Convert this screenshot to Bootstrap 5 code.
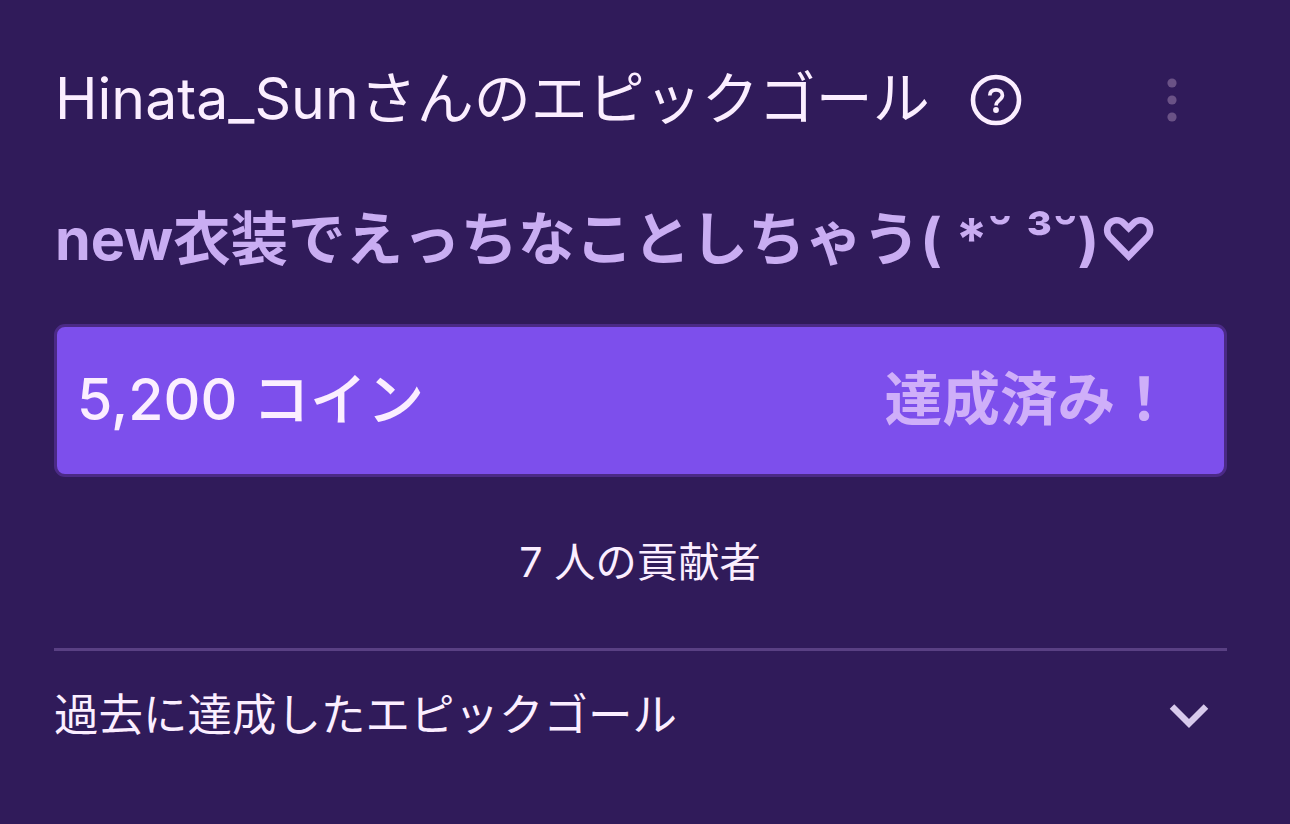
<!DOCTYPE html>
<html lang="ja">
<head>
<meta charset="utf-8">
<meta name="viewport" content="width=device-width, initial-scale=1">
<title>エピックゴール</title>
<link href="https://cdn.jsdelivr.net/npm/bootstrap@5.3.0/dist/css/bootstrap.min.css" rel="stylesheet">
<style>
  body { background: #301b5a; color: #fbeeff; font-family: Inter, "Noto Sans CJK JP", sans-serif; overflow: hidden; }
  .goal-panel { width: 1290px; height: 824px; padding: 58px 63px 0 54px; }
  .goal-title { font-size: 57.2px; line-height: 84px; height: 84px; }
  .goal-title-text { padding: 0 0 3px 1px; }
  .goal-title-kana { font-size: 57px; margin-left: 1px; }
  .goal-name { color: #c9adf2; font-size: 57.5px; line-height: 84px; height: 84px; margin-top: 55px; padding-left: 1px; letter-spacing: -.02px; }
  .goal-bar { height: 153px; margin-top: 43px; background: #7d4fec; border: 3px solid #4b2a86; border-radius: 11px; padding: 0 51px 2px 20px; font-size: 57.7px; }
  .goal-coins { font-size: 57.2px; font-weight: 450; }
  .goal-state { color: #cfaff9; }
  .goal-fans { font-size: 41.3px; line-height: 60px; margin-top: 55px; height: 60px; padding-right: 1px; }
  .goal-rule { height: 3px; margin-top: 56px; background: #594083; }
  .goal-past { font-size: 44.5px; line-height: 64px; margin-top: 32px; height: 64px; }
</style>
</head>
<body>
<main class="goal-panel d-flex flex-column">
  <header class="goal-title d-flex align-items-center text-nowrap">
    <span class="goal-title-text">Hinata_Sun<span class="goal-title-kana">さんのエピックゴール</span></span>
    <svg class="ms-auto" style="margin-right:144px" width="54" height="54" viewBox="0 0 54 54" fill="none" stroke="#fbeeff" aria-label="help">
      <circle cx="27" cy="27" r="23" stroke-width="4.6"/>
      <path d="M20.8 22.5C20.8 18.7 23.3 16.8 27 16.8s6.4 2.1 6.4 5.5c0 4.8-6.3 5-6.3 10.2" stroke-width="3.7"/>
      <circle cx="27" cy="37" r="2.9" fill="#fbeeff" stroke="none"/>
    </svg>
    <svg style="margin-right:50px" width="10" height="46" viewBox="0 0 10 46" fill="#6a5286" aria-label="menu">
      <circle cx="5" cy="6" r="4.6"/><circle cx="5" cy="23" r="4.6"/><circle cx="5" cy="40" r="4.6"/>
    </svg>
  </header>
  <h1 class="goal-name fw-bold mb-0 text-nowrap">new衣装でえっちなことしちゃう( *˘ ³˘)♡</h1>
  <section class="goal-bar d-flex align-items-center justify-content-between text-nowrap">
    <span class="goal-coins">5,200 コイン</span>
    <span class="goal-state fw-bold">達成済み！</span>
  </section>
  <p class="goal-fans text-center mb-0">7 人の貢献者</p>
  <div class="goal-rule"></div>
  <footer class="goal-past d-flex align-items-center justify-content-between">
    <span>過去に達成したエピックゴール</span>
    <svg style="margin-right:18px" width="40" height="28" viewBox="0 0 40 28" fill="none" stroke="#d8caec" stroke-width="6.4" aria-label="open"><path d="M3 5.5 20 22.5 37 5.5"/></svg>
  </footer>
</main>
<script src="https://cdn.jsdelivr.net/npm/bootstrap@5.3.0/dist/js/bootstrap.bundle.min.js"></script>
</body>
</html>
